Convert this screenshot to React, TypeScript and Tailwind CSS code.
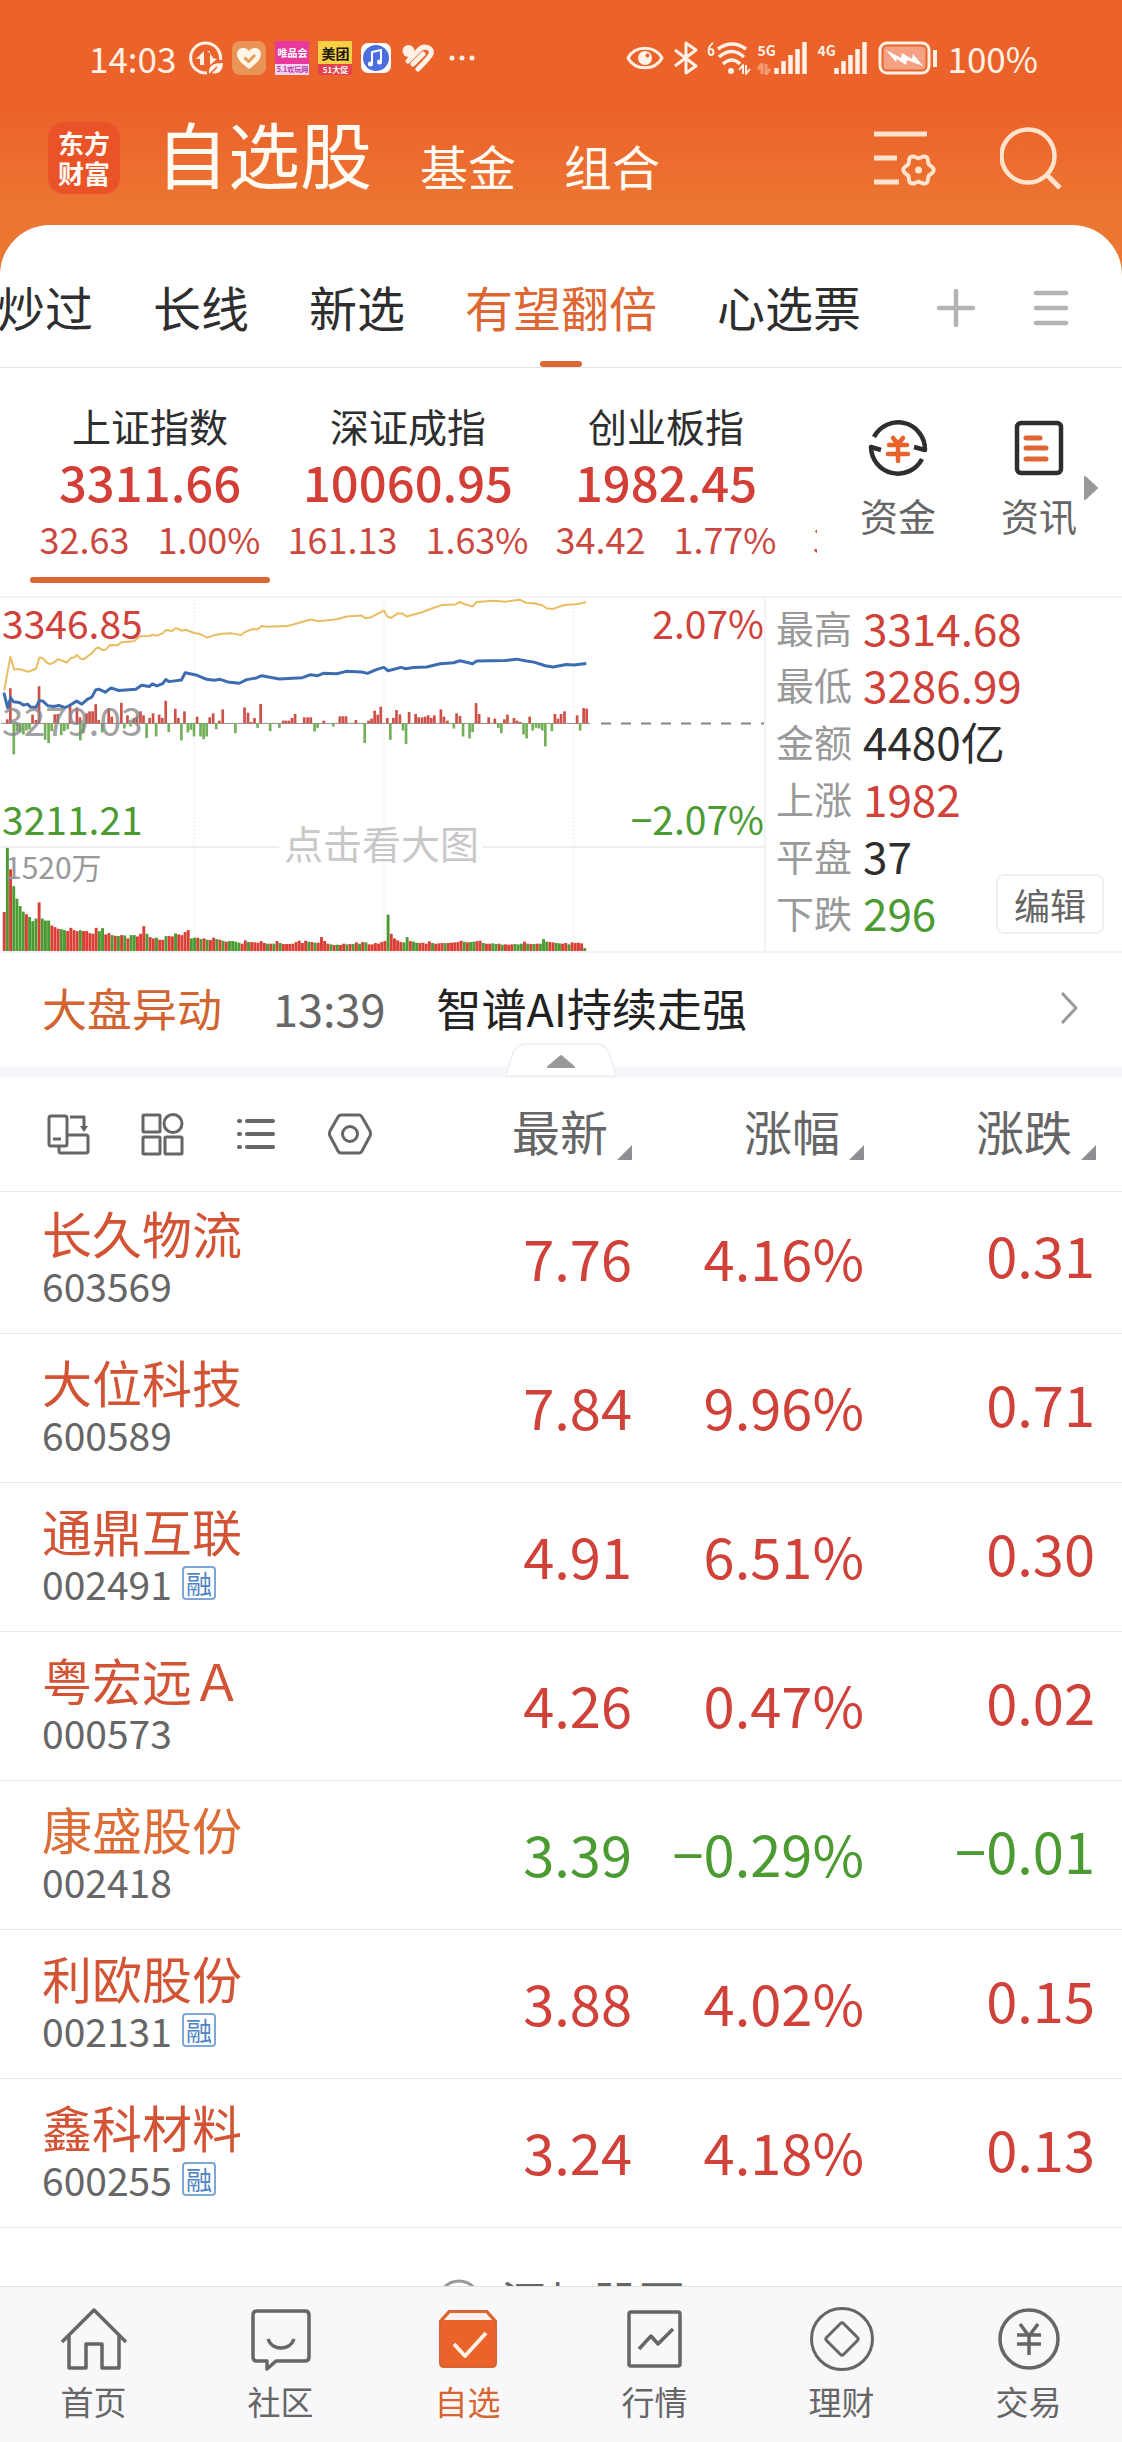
import { useEffect, useRef, type ReactNode } from "react";

const RED = "text-[#cf4139]";
const GREEN = "text-[#4b9a32]";

type Stock = {
  name: string;
  code: string;
  price: string;
  pct: string;
  diff: string;
  down?: boolean;
  margin?: boolean;
};

const stocks: Stock[] = [
  { name: "长久物流", code: "603569", price: "7.76", pct: "4.16%", diff: "0.31" },
  { name: "大位科技", code: "600589", price: "7.84", pct: "9.96%", diff: "0.71" },
  { name: "通鼎互联", code: "002491", price: "4.91", pct: "6.51%", diff: "0.30", margin: true },
  { name: "粤宏远Ａ", code: "000573", price: "4.26", pct: "0.47%", diff: "0.02" },
  { name: "康盛股份", code: "002418", price: "3.39", pct: "−0.29%", diff: "−0.01", down: true },
  { name: "利欧股份", code: "002131", price: "3.88", pct: "4.02%", diff: "0.15", margin: true },
  { name: "鑫科材料", code: "600255", price: "3.24", pct: "4.18%", diff: "0.13", margin: true },
];

const indices = [
  { name: "上证指数", value: "3311.66", diff: "32.63", pct: "1.00%", active: true },
  { name: "深证成指", value: "10060.95", diff: "161.13", pct: "1.63%" },
  { name: "创业板指", value: "1982.45", diff: "34.42", pct: "1.77%" },
];

const stats = [
  { label: "最高", value: "3314.68", tone: RED },
  { label: "最低", value: "3286.99", tone: RED },
  { label: "金额", value: "4480亿", tone: "text-[#2e2e2e]" },
  { label: "上涨", value: "1982", tone: RED },
  { label: "平盘", value: "37", tone: "text-[#2e2e2e]" },
  { label: "下跌", value: "296", tone: GREEN },
];

/* ---------- chart data ---------- */

const volume =
  "r118 g312 r247 g196 g158 g136 g119 r111 g103 g90 g98 r147 g98 g92 g92 r77 r72 r67 g66 g63 r60 r70 r63 r60 g63 r60 r60 r54 r52 r70 g60 g69 r50 r54 g48 r46 g45 r48 g47 r38 g48 g48 r44 r52 r75 g52 r42 r38 g40 r34 r34 g45 r45 r44 g53 r50 r48 r57 r63 g38 g40 r40 g36 r38 g34 r33 r40 g36 r34 g31 r28 g30 g30 g28 g25 r22 r32 g27 r27 r26 r25 r30 r24 g22 r22 g22 r30 g24 r21 r21 r21 r22 r27 r31 r24 r31 g28 r27 g25 r25 r42 r30 r22 g20 r18 g19 r18 r22 g20 r21 g21 r26 g22 r27 g26 r20 r20 r24 r22 r27 r30 g110 r52 r38 r32 r27 g26 g42 r30 g28 g25 r24 r25 r22 r29 g24 r22 r23 r24 g24 r24 r25 r26 r27 r31 g28 r26 g27 g28 r30 r31 g24 r22 r22 g23 g21 r22 g19 r20 r19 r20 g21 g20 g22 r28 g22 r21 g21 r22 g22 g36 g28 r27 r26 g24 g23 r22 r24 g20 r26 r24 r25 r23 g9"
    .split(" ")
    .map((v) => ({ up: v[0] === "r", h: Number(v.slice(1)) }));

const rises =
  "19:12 27:106 85:26 94:10 102:112 143:27 151:28 183:54 201:48 209:18 226:30 234:36 242:36 250:58 258:10 284:46 292:20 317:62 333:24 350:16 358:20 367:36 375:24 391:16 400:30 416:26 424:16 433:68 458:44 466:16 482:36 515:20 548:18 557:30 573:8 582:42 639:48 648:32 656:4 665:16 681:58 740:8 747:8 755:8 763:16 771:28 795:18 804:18 812:18 846:8 888:21 896:21 904:21 930:10 963:8 971:14 979:38 987:26 995:50 1012:16 1028:16 1036:40 1045:27 1069:34 1086:28 1094:18 1103:18 1111:20 1119:24 1127:16 1135:24 1152:42 1160:20 1169:8 1193:30 1202:22 1244:61 1252:28 1277:18 1293:14 1318:12 1326:26 1343:16 1351:8 1359:4 1384:20 1450:28 1458:14 1466:28 1475:36 1508:24 1525:46 1533:44";
const falls =
  "36:94 44:24 53:28 61:34 69:22 77:18 118:50 127:60 135:24 160:36 168:24 177:18 210:52 218:30 267:28 325:16 341:10 383:45 408:40 441:27 474:52 491:28 499:20 507:40 524:40 532:48 540:40 565:18 615:30 673:14 706:24 730:14 822:25 830:14 871:10 953:60 1020:50 1053:22 1061:63 1186:16 1210:40 1227:46 1235:27 1302:14 1310:30 1368:34 1376:46 1392:22 1401:14 1409:16 1417:22 1425:70 1442:24 1516:22";
const parse = (s: string) => s.split(" ").map((p) => p.split(":").map(Number));

const averageLine =
  "11,298 20,240 27,196 37,234 50,233 74,241 94,232 103,198 112,200 123,214 131,218 140,214 152,203 175,213 186,199 194,198 201,190 209,201 219,203 240,185 250,171 258,168 267,175 275,175 288,160 308,161 316,152 350,149 366,134 390,133 400,129 410,132 425,125 433,115 450,118 460,109 475,117 485,114 507,124 520,126 541,138 560,131 580,126 605,125 630,130 640,121 660,112 672,113 684,103 700,105 750,103 775,95 812,83 830,88 870,84 888,80 905,74 945,71 955,79 970,76 1003,56 1012,74 1022,78 1040,64 1053,66 1062,74 1075,70 1100,62 1130,49 1155,39 1190,38 1201,30 1215,37 1235,44 1245,30 1290,26 1320,29 1358,23 1375,33 1395,34 1417,40 1428,49 1445,51 1475,39 1510,36 1532,30";
const priceLine =
  "10,304 20,350 28,320 35,332 50,334 62,342 72,339 80,348 94,349 103,328 112,330 125,344 140,346 154,343 170,350 185,341 200,330 214,339 228,325 240,318 250,296 258,294 275,303 290,290 310,298 355,294 370,282 390,286 398,278 410,284 425,277 433,265 442,271 474,266 484,244 515,252 540,264 560,267 575,264 595,272 625,276 645,265 670,260 684,253 730,263 790,259 812,250 830,253 845,246 880,247 905,240 945,242 960,246 985,234 1003,228 1014,238 1048,228 1060,232 1080,228 1115,227 1150,217 1185,214 1202,208 1235,217 1245,209 1320,207 1350,203 1372,208 1395,212 1425,223 1445,227 1480,219 1500,221 1532,216";

function IndexChart() {
  return (
    <svg viewBox="0 0 764 356" preserveAspectRatio="none" className="block h-full w-full" aria-hidden="true">
      <g stroke="#e9e9e9" strokeWidth="1" strokeDasharray="2 2">
        <path d="M194 1V355M384 1V355M574 1V355" />
      </g>
      <path d="M0 251H279M482 251H764" stroke="#efefef" strokeWidth="2" />
      <path d="M1 126.500H590" stroke="#9a8a86" strokeWidth="1" />
      <path d="M601 126.500H764" stroke="#858585" strokeWidth="2" strokeDasharray="10 10" />
      <g transform="translate(0 -6) scale(.3827 .3333)">
        {parse(rises).map(([x, h]) => (
          <rect key={x} x={x - 3.5} y={397 - h} width="7" height={h} fill="#cd5049" />
        ))}
        {parse(falls).map(([x, h]) => (
          <rect key={x} x={x - 3.5} y={397} width="7" height={h} fill="#74b05c" />
        ))}
        {volume.map((v, i) => (
          <rect key={i} x={7.2 + i * 8.29} y={1086 - v.h} width="7.600" height={v.h} fill={v.up ? "#da3f36" : "#4b9a32"} />
        ))}
        <polyline points={averageLine} fill="none" stroke="#eabd62" strokeWidth="2" strokeLinejoin="round" vectorEffect="non-scaling-stroke" />
        <polyline points={priceLine} fill="none" stroke="#3d6cb0" strokeWidth="3" strokeLinejoin="round" vectorEffect="non-scaling-stroke" />
      </g>
    </svg>
  );
}

/* ---------- icons ---------- */

function Svg({ box, className, children }: { box: string; className: string; children: ReactNode }) {
  return (
    <svg viewBox={box} className={className} fill="none" stroke="currentColor" strokeLinejoin="round" aria-hidden="true">
      {children}
    </svg>
  );
}

/* Six-lobed gear outline around (cx, cy). */
function gearPoints(cx: number, cy: number) {
  return Array.from({ length: 72 }, (_, i) => {
    const a = (i * Math.PI) / 36;
    const r = 13.5 + 1.7 * Math.cos(6 * a);
    return (cx + r * Math.cos(a)).toFixed(1) + "," + (cy + r * Math.sin(a)).toFixed(1);
  }).join(" ");
}

function Signal() {
  return (
    <Svg box="0 0 34 32" className="h-8 w-[34px]">
      <path d="M2.500 26v6M9.500 19v13M16.500 13v19M23.500 7v25M30.500 0v32" strokeWidth="4.500" />
    </Svg>
  );
}

function StatusBar() {
  return (
    <div className="flex h-[74px] items-center justify-between pt-[42px] pr-[84px] pl-[89px] text-[35px] leading-8 text-[#fff1e6]">
      <div className="flex items-center gap-[9px]">
        <span>14:03</span>
        <Svg box="0 0 34 34" className="ml-1 h-[34px] w-[34px]">
          <path d="M31.500 19A15 15 0 1 0 18 32" strokeWidth="3" />
          <path d="M7 18l8-8v14h-4v-6z M18 10h3v14l7-6-4-1-3-5z" fill="currentColor" stroke="none" />
          <path d="M20 33c-1-8 4-11 14-11 0 8-5 12-11 10z" fill="currentColor" stroke="none" />
          <path d="M20 34l8-8" stroke="#ea632b" strokeWidth="1.500" />
        </Svg>
        <Svg box="0 0 34 34" className="h-[34px] w-[34px]">
          <rect width="34" height="34" rx="8" fill="#eb9457" stroke="none" />
          <path d="M17 28C9 22 5 18 5 13c0-7 9-8 12-3 3-5 12-4 12 3 0 5-4 9-12 15z" fill="#fff6e8" stroke="none" />
          <path d="M12.500 16.500l4 4 6.500-6.500" stroke="#e59a55" strokeWidth="3" />
        </Svg>
        <span className="flex h-[34px] w-[34px] flex-col overflow-hidden text-center font-bold whitespace-nowrap">
          <span className="h-[23px] bg-[#e83a9c] text-[10px] leading-6 text-white">唯品会</span>
          <span className="bg-[#f7d3f3] text-[7px] leading-[11px] text-[#b5369c]">5.1欢玩网</span>
        </span>
        <span className="flex h-[34px] w-[34px] flex-col overflow-hidden text-center font-bold whitespace-nowrap">
          <span className="h-[23px] bg-[#f8cf45] text-[14px] leading-6 text-[#1d1a10]">美团</span>
          <span className="bg-[#e5424e] text-[8px] leading-[11px] text-white">51大促</span>
        </span>
        <Svg box="0 0 30 30" className="h-[30px] w-[30px]">
          <rect width="30" height="30" rx="7" fill="#fff" stroke="none" />
          <circle cx="15" cy="15" r="13" fill="#4a6fe0" stroke="none" />
          <path d="M11 21V9l9-2v12" stroke="#fff" strokeWidth="2" />
          <circle cx="9.500" cy="21" r="2.500" fill="#fff" stroke="none" />
          <circle cx="18.500" cy="19" r="2.500" fill="#fff" stroke="none" />
        </Svg>
        <Svg box="0 0 32 28" className="ml-[2px] h-7 w-8">
          <circle cx="6.500" cy="7" r="6" fill="currentColor" stroke="none" />
          <g strokeWidth="5" strokeLinecap="round">
            <path d="M6 17L17 6" />
            <path d="M11 20L21 10M17 6c4-5 14-3 12 4-1 3-8 10-13 15" />
          </g>
        </Svg>
        <Svg box="0 0 26 6" className="ml-[6px] h-[6px] w-[26px]">
          <g fill="currentColor" stroke="none">
            <circle cx="3" cy="3" r="2.500" />
            <circle cx="13" cy="3" r="2.500" />
            <circle cx="23" cy="3" r="2.500" />
          </g>
        </Svg>
      </div>
      <div className="flex items-center">
        <Svg box="0 0 38 26" className="h-[26px] w-[38px]">
          <path d="M2 13C9 0 29 0 36 13 29 26 9 26 2 13z" strokeWidth="3" />
          <circle cx="19" cy="13" r="7" fill="currentColor" stroke="none" />
          <circle cx="21.500" cy="10.500" r="2" fill="#ea632b" stroke="none" />
        </Svg>
        <Svg box="0 0 24 34" className="ml-[10px] h-[34px] w-6">
          <path d="M1 9l21 16-10 7V2l10 7L1 25" strokeWidth="3" />
        </Svg>
        <Svg box="0 0 44 34" className="ml-[9px] h-[34px] w-11">
          <path d="M6 2C0 6 1 14 4 14s4-6-1-6" strokeWidth="2" />
          <g strokeWidth="3.500">
            <path d="M11 8Q25-2 39 8M12 16Q25 5 37 16M16 23Q25 15 33 23" />
          </g>
          <circle cx="24" cy="30" r="3" fill="currentColor" stroke="none" />
          <path d="M32 29l4-5v9M39 24v9l4-5" strokeWidth="2" />
        </Svg>
        <span className="ml-[6px] flex w-[17px] flex-col self-stretch text-[14px] leading-[18px] font-bold">
          5G
          <Svg box="0 0 14 12" className="mt-1 h-3 w-[14px] text-[#f59a74]">
            <path d="M1 6l4-5v10M9 1v10l4-5" strokeWidth="3" />
          </Svg>
        </span>
        <Signal />
        <span className="ml-[9px] w-[17px] self-start text-[14px] leading-[18px] font-bold">4G</span>
        <Signal />
        <Svg box="0 0 61 34" className="mr-2 ml-[10px] h-[34px] w-[61px]">
          <rect x="2" y="2" width="49" height="30" rx="7" strokeWidth="3" />
          <rect x="5.500" y="5.500" width="42" height="23" rx="3" fill="#f4a283" stroke="none" />
          <path d="M8 9l15 8 1-5 10 6 1-5 10 12-16-6-1 5-9-6-1 3z" fill="#fff" stroke="none" />
          <path d="M57 9v17" strokeWidth="4" />
        </Svg>
        <span>100%</span>
      </div>
    </div>
  );
}

function Header() {
  return (
    <header className="bg-[linear-gradient(#eb632b_115px,#ec7733_215px)]">
      <StatusBar />
      <div className="flex h-[151px] items-center pt-4 pr-[60px] pl-12 text-[#fffaf2]">
        <div className="grid h-[72px] w-[72px] content-center rounded-2xl bg-[#ea5228] text-center text-[26px] leading-[30px] font-bold">
          <span>东方</span>
          <span>财富</span>
        </div>
        <nav className="ml-9 flex flex-1 items-end gap-12 pb-3 text-[48px] leading-[58px]">
          <a href="#stocks" className="text-[72px] leading-[84px]">自选股</a>
          <a href="#funds">基金</a>
          <a href="#groups">组合</a>
        </nav>
        <button type="button" aria-label="设置列表" className="mr-16 text-[#ffe3cd]">
          <Svg box="0 0 62 56" className="h-14 w-[62px]">
            <path d="M0 4h53M0 28h23M0 52h25" strokeWidth="5" />
            <polygon points={gearPoints(44.5, 40)} strokeWidth="4" />
            <circle cx="44.500" cy="40" r="3.500" fill="currentColor" stroke="none" />
          </Svg>
        </button>
        <button type="button" aria-label="搜索" className="text-[#ffe3cd]">
          <Svg box="0 0 62 62" className="h-[62px] w-[62px]">
            <circle cx="28" cy="29" r="26.500" strokeWidth="4.500" />
            <path d="M47 48l13 13" strokeWidth="5" />
          </Svg>
        </button>
      </div>
    </header>
  );
}

function GroupTabs() {
  const tabs = ["炒过", "长线", "新选", "有望翻倍", "心选票"];
  return (
    <div className="flex h-[143px] items-stretch justify-between border-b border-[#e4e4e4] pr-[51px]">
      <div role="tablist" className="-ml-[3px] flex gap-[60px] text-[48px] leading-[56px] text-[#2e2e2e]">
        {tabs.map((t) => (
          <button
            key={t}
            type="button"
            role="tab"
            aria-selected={t === "有望翻倍"}
            className={"relative pt-5 whitespace-nowrap " + (t === "有望翻倍" ? "text-[#de6632]" : "")}
          >
            {t}
            {t === "有望翻倍" && (
              <span className="absolute bottom-0 left-1/2 h-[6px] w-[42px] -translate-x-1/2 rounded-full bg-[#de6632]" />
            )}
          </button>
        ))}
      </div>
      <div className="flex items-center gap-[55px] pt-6 text-[#b3b3b3]">
        <button type="button" aria-label="新建分组">
          <Svg box="0 0 40 40" className="h-10 w-10">
            <path d="M20 3v34M3 20h34" strokeWidth="4.500" strokeLinecap="round" />
          </Svg>
        </button>
        <button type="button" aria-label="管理分组">
          <Svg box="0 0 40 40" className="h-10 w-10">
            <path d="M5 5h30M5 20h30M5 35h30" strokeWidth="4.500" strokeLinecap="round" />
          </Svg>
        </button>
      </div>
    </div>
  );
}

function IndexStrip() {
  return (
    <div className="flex h-[228px] items-start">
      <div className="ml-[21px] flex h-full w-[796px] overflow-hidden text-center">
        {indices.map((q) => (
          <button key={q.name} type="button" className="relative flex h-full w-[258px] shrink-0 flex-col items-center pt-8">
            <span className="text-[39px] leading-[50px] text-[#2e2e2e]">{q.name}</span>
            <span className="text-[49px] leading-[62px] font-medium text-[#d33e36]">{q.value}</span>
            <span className="flex gap-7 text-[36px] leading-[52px] text-[#cb4840]">
              <span>{q.diff}</span>
              <span>{q.pct}</span>
            </span>
            {q.active && <span className="absolute inset-x-[9px] bottom-[13px] h-[6px] rounded-full bg-[#de6632]" />}
          </button>
        ))}
        <div className="w-[258px] shrink-0 pt-36 pl-[18px] text-left text-[36px] leading-[52px] text-[#cb4840]" aria-hidden="true">
          3
        </div>
      </div>
      <div className="flex flex-1 items-center pt-[50px] text-[38px] leading-[46px] text-[#666]">
        <button type="button" className="ml-[43px] flex flex-col items-center gap-[14px]">
          <Svg box="0 0 60 60" className="h-[60px] w-[60px] text-[#2e2e2e]">
            <g strokeWidth="4.500">
              <path d="M6 19A27 27 0 0 1 57 32l-11-3M54 41A27 27 0 0 1 3 29l10 3" />
            </g>
            <g stroke="#e8632b" strokeWidth="4.500" strokeLinecap="round">
              <path d="M25 20l5 6 5-6M21 27h18M20 36h20M30 27v16" />
            </g>
          </Svg>
          资金
        </button>
        <button type="button" className="ml-[65px] flex flex-col items-center gap-[14px]">
          <Svg box="0 0 60 60" className="h-[60px] w-[60px] text-[#2e2e2e]">
            <rect x="8" y="5" width="44" height="50" rx="4" strokeWidth="4.500" />
            <path d="M17 20h14M17 30h20M17 41h20" stroke="#de6632" strokeWidth="5" strokeLinecap="round" />
          </Svg>
          资讯
        </button>
        <Svg box="0 0 16 26" className="mt-5 ml-[6px] h-[26px] w-4 text-[#999]">
          <path d="M2 2l12 11L2 24z" fill="currentColor" strokeWidth="2" />
        </Svg>
      </div>
    </div>
  );
}

function MarketPanel() {
  const label = "absolute leading-10 text-[39px]";
  return (
    <section className="flex h-[357px] border-y-2 border-[#f3f3f3]">
      <div className="relative flex-1">
        <span className={label + " top-1 left-[2px] " + RED}>3346.85</span>
        <span className={label + " top-[200px] left-[2px] " + GREEN}>3211.21</span>
        <span className="absolute top-[248px] left-[5px] text-[30px] leading-10 text-[#999]">1520万</span>
        <IndexChart />
        <span className={label + " top-[101px] left-[2px] text-[#888]/80"}>3279.03</span>
        <span className={label + " top-1 right-0 " + RED}>2.07%</span>
        <span className={label + " top-[200px] right-0 " + GREEN}>−2.07%</span>
        <button type="button" className="absolute top-[221px] left-[284px] text-[39px] leading-[46px] text-[#c8c8c8]">
          点击看大图
        </button>
      </div>
      <div className="relative w-[358px] border-l-2 border-[#f3f3f3] pl-[10px]">
        <dl>
          {stats.map((s) => (
            <div key={s.label} className="flex h-[57px] items-center gap-[11px]">
              <dt className="text-[38px]/[52px] text-[#999]">{s.label}</dt>
              <dd className={"text-[44px]/[56px] " + s.tone}>{s.value}</dd>
            </div>
          ))}
        </dl>
        <button
          type="button"
          className="absolute right-[18px] bottom-[17px] rounded-lg border-2 border-[#efefef] bg-white px-4 text-[36px] leading-[56px] text-[#666]"
        >
          编辑
        </button>
      </div>
    </section>
  );
}

function NewsBar() {
  return (
    <div className="relative border-b-[12px] border-[#f6f7fa]">
      <a href="#news" className="flex h-[113px] items-center pr-11 pb-1 pl-[42px] text-[45px]">
        <span className="text-[#d16430]">大盘异动</span>
        <span className="ml-[51px] text-[#666]">13:39</span>
        <span className="ml-[51px] flex-1 text-[#222]">智谱AI持续走强</span>
        <Svg box="0 0 18 34" className="h-[34px] w-[18px] text-[#999]">
          <path d="M2 2l14 15L2 32" strokeWidth="3" />
        </Svg>
      </a>
      <button type="button" aria-label="收起" className="absolute -bottom-[11px] left-1/2 -translate-x-1/2">
        <Svg box="0 0 112 34" className="h-[34px] w-28 text-[#999]">
          <path d="M1 33Q4 20 8 10 12 1 22 1H90Q100 1 104 10 108 20 111 33z" fill="#fff" stroke="#f1f1f3" strokeWidth="2" />
          <path d="M43 24L56 13l13 11z" fill="currentColor" strokeWidth="2" />
        </Svg>
      </button>
    </div>
  );
}

function ListTools() {
  const cls = "h-11 w-11";
  return (
    <div className="flex gap-[50px] pb-[2px] pl-[46px] text-[#666]">
      <button type="button" aria-label="横屏">
        <Svg box="0 0 44 44" className={cls}>
          <g strokeWidth="3">
            <rect x="3" y="4" width="18" height="30" rx="2" />
            <path d="M7 27h8M24 5h14v13M21 23h19a2 2 0 0 1 2 2v14a2 2 0 0 1-2 2H15a2 2 0 0 1-2-2v-5" />
          </g>
          <path d="M34 14h8l-4 6z" fill="currentColor" stroke="none" />
        </Svg>
      </button>
      <button type="button" aria-label="宫格">
        <Svg box="0 0 44 44" className={cls}>
          <g strokeWidth="3">
            <rect x="3" y="3" width="17" height="17" rx="1" />
            <circle cx="33" cy="11.500" r="9" />
            <rect x="3" y="25" width="17" height="17" rx="1" />
            <rect x="25" y="25" width="17" height="17" rx="1" />
          </g>
        </Svg>
      </button>
      <button type="button" aria-label="列表">
        <Svg box="0 0 44 44" className={cls}>
          <path d="M13 9h26M13 22h26M13 35h26M5 9h1M5 22h1M5 35h1" strokeWidth="4" strokeLinecap="round" />
        </Svg>
      </button>
      <button type="button" aria-label="设置">
        <Svg box="0 0 44 44" className={cls}>
          <path d="M13 3h18q2 0 3 2l8 14q1 3 0 5l-8 15q-1 2-3 2H13q-2 0-3-2L2 24q-1-2 0-5l8-14q1-2 3-2z" strokeWidth="3" />
          <circle cx="22" cy="22" r="7.500" strokeWidth="3" />
        </Svg>
      </button>
    </div>
  );
}

function StockTable() {
  const ref = useRef<HTMLDivElement>(null);
  useEffect(() => {
    if (ref.current) ref.current.scrollTop = 7;
  }, []);
  const head = "sticky top-0 h-[114px] border-b border-[#e9e9e9] bg-white p-0 font-normal text-[#666]";
  const cell = "h-[149px] border-b border-[#e9e9e9] p-0 text-right text-[56px] leading-[64px] whitespace-nowrap";
  return (
    <div ref={ref} className="min-h-0 flex-1 overflow-hidden">
      <table className="w-full table-fixed border-separate border-spacing-0">
        <thead>
          <tr>
            <th className={head}>
              <ListTools />
            </th>
            {[
              ["最新", "w-[232px]"],
              ["涨幅", "w-[232px]"],
              ["涨跌", "w-[258px] pr-[26px]"],
            ].map(([t, w]) => (
              <th key={t} className={head + " pb-[5px] " + w}>
                <button type="button" className="flex w-full items-end justify-end gap-[9px] text-[48px] leading-[52px]">
                  <span className="pb-1">{t}</span>
                  <Svg box="0 0 15 15" className="h-[15px] w-[15px] text-[#8e8e93]">
                    <path d="M15 0v15H0z" fill="currentColor" stroke="none" />
                  </Svg>
                </button>
              </th>
            ))}
          </tr>
        </thead>
        <tbody>
          {stocks.map((s) => {
            const tone = s.down ? GREEN : RED;
            return (
              <tr key={s.code}>
                <td className="border-b border-[#e9e9e9] p-0 pb-2 pl-[42px]">
                  <div className={"text-[50px] leading-[60px] " + (s.down ? "text-[#dd6d36]" : "text-[#d25435]")}>{s.name}</div>
                  <div className="flex items-center gap-[10px] text-[39px] leading-[46px] text-[#666]">
                    {s.code}
                    {s.margin && (
                      <span className="rounded border-2 border-[#7fa6d6] px-[2px] text-[26px] leading-[30px] text-[#4f84c4]">融</span>
                    )}
                  </div>
                </td>
                <td className={cell + " pb-1 " + tone}>{s.price}</td>
                <td className={cell + " pb-1 " + tone}>{s.pct}</td>
                <td className={cell + " pr-[27px] pb-[10px] " + tone}>{s.diff}</td>
              </tr>
            );
          })}
        </tbody>
      </table>
      <button type="button" className="flex h-[149px] w-full items-center justify-center gap-5 pb-1 text-[46px] text-[#666]">
        <Svg box="0 0 44 44" className="h-11 w-11 text-[#999]">
          <circle cx="22" cy="22" r="20" strokeWidth="3" />
          <path d="M22 12v20M12 22h20" strokeWidth="3" />
        </Svg>
        添加股票
      </button>
    </div>
  );
}

const navItems: { label: string; icon: ReactNode; active?: boolean }[] = [
  {
    label: "首页",
    icon: (
      <g strokeWidth="3.500">
        <path d="M1 36L33 4l32 32" />
        <path d="M8 30v32h17V38h16v24h17V30" />
      </g>
    ),
  },
  {
    label: "社区",
    icon: (
      <g strokeWidth="3.500">
        <path d="M9 5h48q4 0 4 4v42q0 4-4 4H28l-9 8v-8H9q-4 0-4-4V9q0-4 4-4z" />
        <path d="M20 33c4 12 22 12 26 0" />
      </g>
    ),
  },
  {
    label: "自选",
    active: true,
    icon: (
      <>
        <path d="M5 15L14 5h38l9 10v42q0 4-4 4H9q-4 0-4-4z" fill="#ea632b" strokeWidth="2" />
        <path d="M9 14L15 7h36l6 7z" fill="#fbf3ef" stroke="none" />
        <path d="M19 38l11 12 21-23" stroke="#fff1e6" strokeWidth="4" />
      </>
    ),
  },
  {
    label: "行情",
    icon: (
      <g strokeWidth="3.500">
        <rect x="7" y="6" width="51" height="54" rx="2" />
        <path d="M17 43l12-13 7 8 15-15" />
      </g>
    ),
  },
  {
    label: "理财",
    icon: (
      <g strokeWidth="3">
        <circle cx="33" cy="33" r="30.500" />
        <path d="M34.500 17.500l14 14q1.500 1.500 0 3l-14 14q-1.500 1.500-3 0l-14-14q-1.500-1.500 0-3l14-14q1.500-1.500 3 0z" />
      </g>
    ),
  },
  {
    label: "交易",
    icon: (
      <g strokeWidth="3.500">
        <circle cx="33" cy="33" r="29" />
        <path d="M24 18l9 12 9-12M21 29h24M21 38h24M33 29v20" />
      </g>
    ),
  },
];

function BottomNav() {
  return (
    <nav className="grid h-[156px] shrink-0 grid-cols-6 border-t border-[#e0e0e0] bg-[#f8f8fa]">
      {navItems.map((n) => (
        <a
          key={n.label}
          href={"#" + n.label}
          aria-current={n.active ? "page" : undefined}
          className={"flex flex-col items-center gap-[9px] pt-[19px] text-[33px] leading-10 " + (n.active ? "text-[#d9642f]" : "text-[#666]")}
        >
          <Svg box="0 0 66 66" className="h-[66px] w-[66px]">
            {n.icon}
          </Svg>
          {n.label}
        </a>
      ))}
    </nav>
  );
}

export default function App() {
  return (
    <div className="flex h-screen flex-col bg-[#ec7733] font-['Noto_Sans_CJK_SC','Noto_Sans',sans-serif]">
      <Header />
      <main className="flex min-h-0 flex-1 flex-col overflow-hidden rounded-t-[50px] bg-white">
        <GroupTabs />
        <IndexStrip />
        <MarketPanel />
        <NewsBar />
        <StockTable />
      </main>
      <BottomNav />
    </div>
  );
}
